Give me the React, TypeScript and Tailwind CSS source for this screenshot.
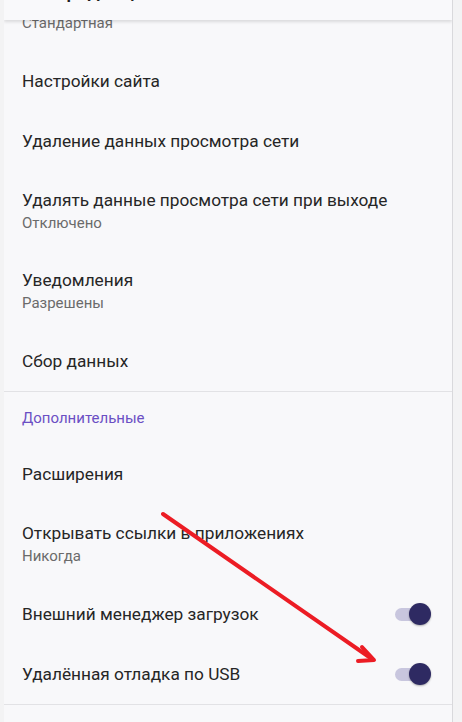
const font = { fontFamily: 'Roboto, "Noto Sans", sans-serif' }

type Row = { title: string; sub?: string; toggle?: boolean }

const topRows: Row[] = [
  { title: '', sub: 'Стандартная' },
  { title: 'Настройки сайта' },
  { title: 'Удаление данных просмотра сети' },
  { title: 'Удалять данные просмотра сети при выходе', sub: 'Отключено' },
  { title: 'Уведомления', sub: 'Разрешены' },
  { title: 'Сбор данных' },
]

const advancedRows: Row[] = [
  { title: 'Расширения' },
  { title: 'Открывать ссылки в приложениях', sub: 'Никогда' },
  { title: 'Внешний менеджер загрузок', toggle: true },
  { title: 'Удалённая отладка по USB', toggle: true },
]

function Toggle() {
  return (
    <div className="relative w-[36px] h-[22px] flex items-center mr-[21px]">
      <div className="w-[28px] h-[13px] rounded-full bg-[#c8c6de]" />
      <div className="absolute right-0 top-0 w-[22px] h-[22px] rounded-full bg-[#2e2a62] shadow-[0_1px_2px_rgba(0,0,0,0.3)]" />
    </div>
  )
}

function SettingRow({ row }: { row: Row }) {
  if (row.sub) {
    return (
      <div className="h-[80px] flex flex-col pl-[18px] pt-[19px]">
        <p className="h-[20px] text-[17.25px] leading-[20px] text-[#262626]">{row.title}</p>
        <p className="text-[15px] leading-[18px] mt-[4px] text-[#6b6b6b]">{row.sub}</p>
      </div>
    )
  }
  return (
    <div className="h-[60px] flex items-center justify-between pl-[18px]">
      <p className="text-[17.25px] leading-[20px] text-[#262626]">{row.title}</p>
      {row.toggle && <Toggle />}
    </div>
  )
}

export default function App() {
  return (
    <div className="relative w-[462px] h-[722px] overflow-hidden bg-[#f2f2f3] flex" style={font}>
      <div className="w-[4px] bg-[#f3f3f4]" />
      <div className="relative w-[449px] h-full bg-[#f8f8fa] border-r border-[#d9d9dc] overflow-hidden">
        {/* scrolled list */}
        <div className="-mt-[29px]">
          {topRows.map((r, i) => (
            <SettingRow key={i} row={r} />
          ))}
          <div className="h-px bg-[#e2e2e5]" />
          <div className="h-[52px] flex items-center pl-[18px]">
            <p className="text-[15px] text-[#6b4fc4]">Дополнительные</p>
          </div>
          {advancedRows.map((r) => (
            <SettingRow key={r.title} row={r} />
          ))}
          <div className="h-px bg-[#e2e2e5]" />
          <div className="h-[40px]" />
        </div>

        {/* app bar */}
        <div className="absolute top-0 left-0 right-0 h-[20px] bg-[#f9f9fb] shadow-[0_2px_3px_rgba(0,0,0,0.12)] overflow-hidden">
          <p className="pl-[22px] -mt-[21px] text-[20px] leading-[24px] text-[#202020] font-medium">Конфиденциальность</p>
        </div>
      </div>
      <div className="flex-1 bg-[#f3f3f4]" />

      {/* annotation arrow */}
      <svg className="absolute inset-0 pointer-events-none" width="462" height="722" viewBox="0 0 462 722">
        <g stroke="#ec1c24" strokeWidth="4" strokeLinecap="round" fill="none">
          <line x1="163" y1="514" x2="372" y2="659" />
          <polyline points="362,647 374,660 358,661" strokeLinejoin="round" />
        </g>
      </svg>
    </div>
  )
}
